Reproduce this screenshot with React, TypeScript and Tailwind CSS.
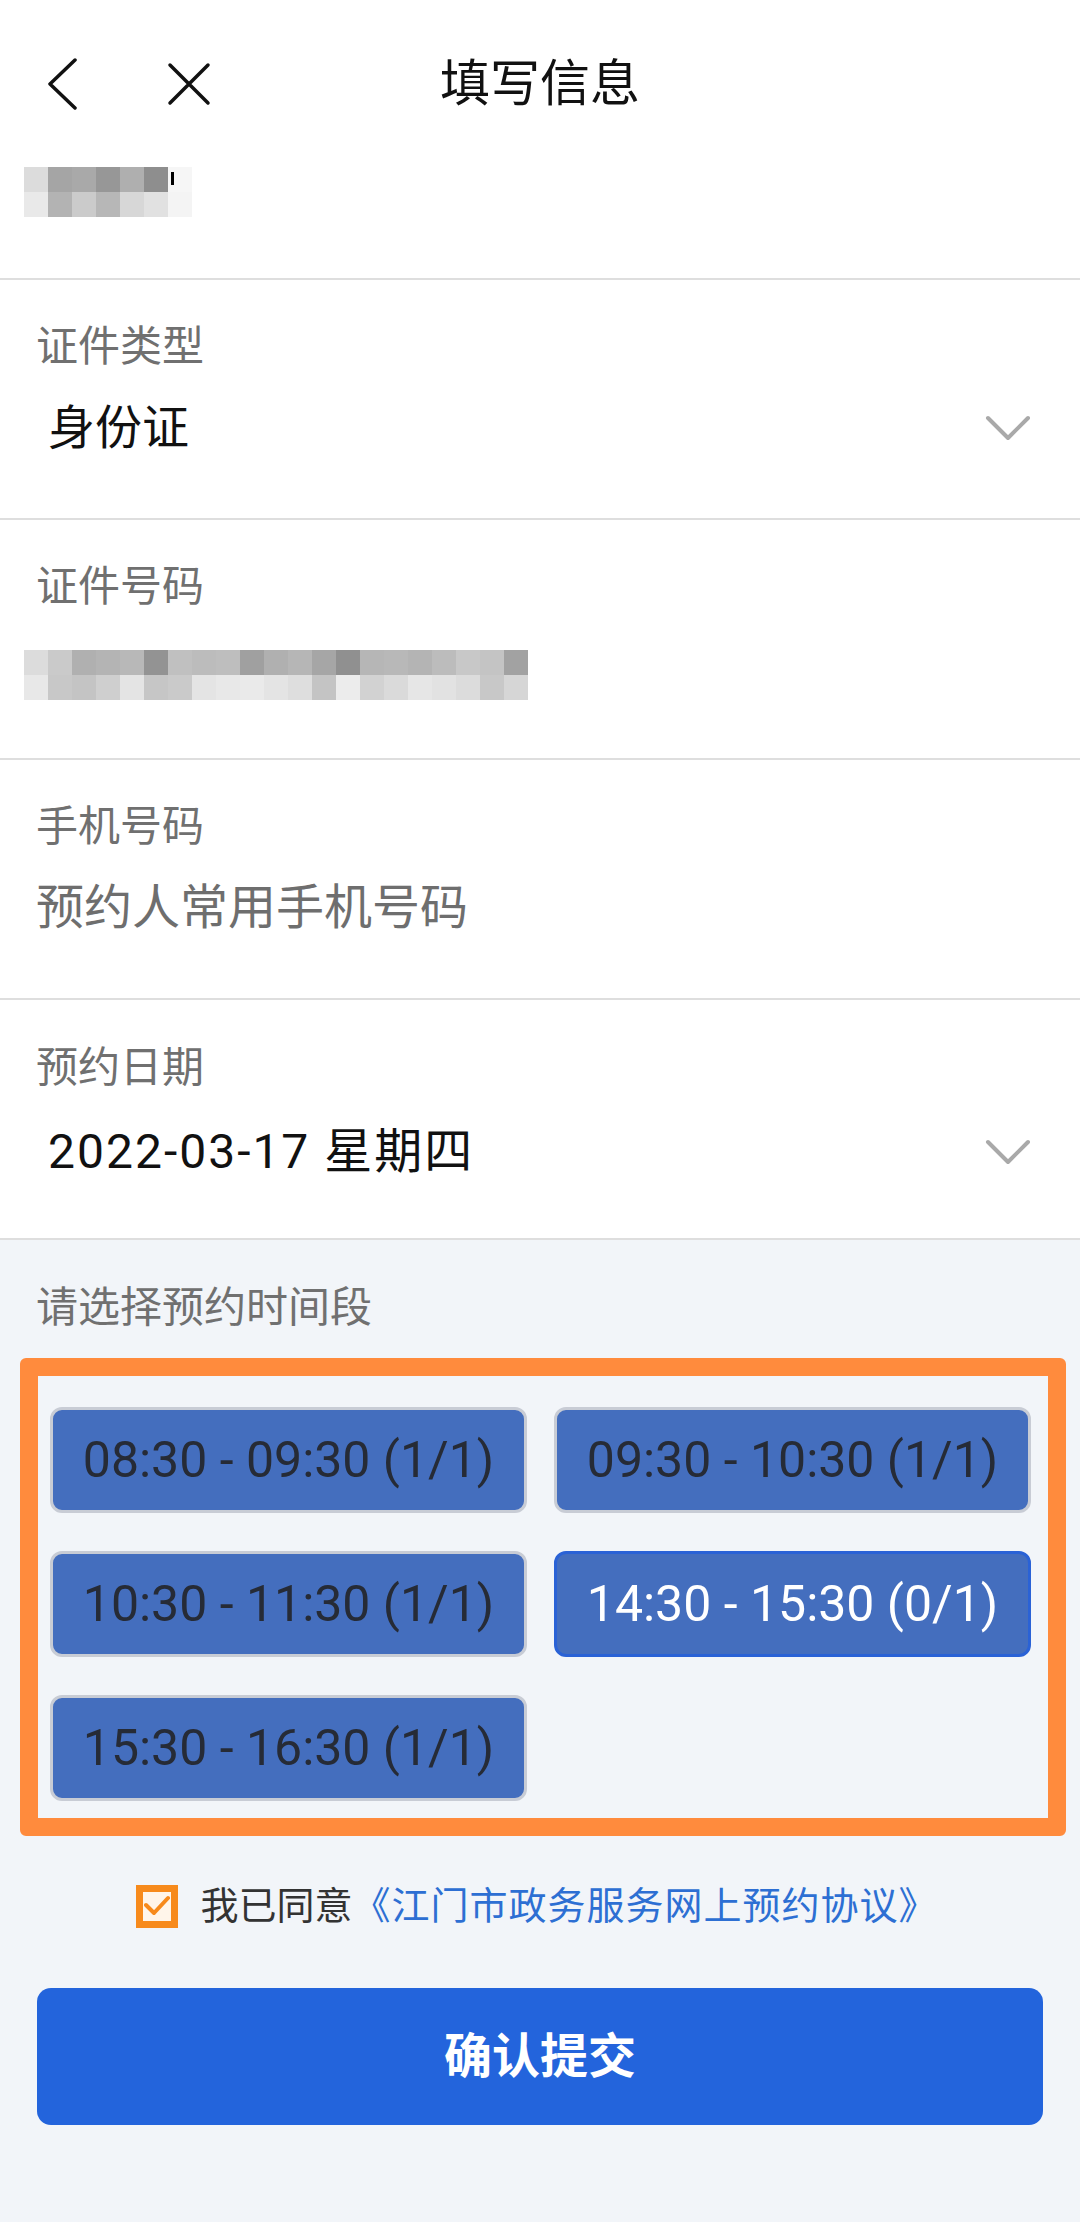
import React from 'react';

const nameBlocks = [
  ['#dcdcdc', '#a5a5a5', '#a9a9a9', '#979797', '#afafaf', '#8e8e8e', '#f6f6f6'],
  ['#e9e9e9', '#b3b3b3', '#cbcbcb', '#b7b7b7', '#d7d7d7', '#e1e1e1', '#f4f4f4'],
];

const idBlocks = [
  ['#dcdcdc', '#cacaca', '#b0b0b0', '#b4b4b4', '#b8b8b8', '#939393', '#c0c0c0', '#bcbcbc', '#bebebe', '#a0a0a0', '#b0b0b0', '#b6b6b6', '#a6a6a6', '#909090', '#b6b6b6', '#b8b8b8', '#b4b4b4', '#bcbcbc', '#c8c8c8', '#c4c4c4', '#a2a2a2'],
  ['#e8e8e8', '#c8c8c8', '#c4c4c4', '#cfcfcf', '#e4e4e4', '#c6c6c6', '#cacaca', '#e4e4e4', '#e8e8e8', '#eaeaea', '#e4e4e4', '#dedede', '#c4c4c4', '#ececec', '#d2d2d2', '#dadada', '#e6e6e6', '#e2e2e2', '#dcdcdc', '#c8c8c8', '#d6d6d6'],
];

const slots = [
  { label: '08:30 - 09:30 (1/1)', selected: false },
  { label: '09:30 - 10:30 (1/1)', selected: false },
  { label: '10:30 - 11:30 (1/1)', selected: false },
  { label: '14:30 - 15:30 (0/1)', selected: true },
  { label: '15:30 - 16:30 (1/1)', selected: false },
];

function ChevronDown() {
  return (
    <svg width="48" height="28" viewBox="0 0 48 28" fill="none">
      <path d="M4 4 L24 24 L44 4" stroke="#a9a9a9" strokeWidth="4" strokeLinecap="round" strokeLinejoin="round" />
    </svg>
  );
}

function Pixelated({ rows }: { rows: string[][] }) {
  return (
    <div className="flex flex-col">
      {rows.map((row, i) => (
        <div key={i} className="flex">
          {row.map((c, j) => (
            <div key={j} className="h-[25px] w-[24px]" style={{ backgroundColor: c }} />
          ))}
        </div>
      ))}
    </div>
  );
}

export default function App() {
  return (
    <div className="min-h-[2222px] w-[1080px] bg-[#f2f5f9] font-[Roboto,'Noto_Sans_CJK_SC',sans-serif]">
      {/* white form area */}
      <div className="bg-white">
        {/* header + name */}
        <div className="h-[280px] border-b-2 border-[#dedede]">
          <div className="grid h-[167px] grid-cols-[1fr_auto_1fr] items-center">
            <div className="flex items-center pl-[46px]">
              <svg width="32" height="52" viewBox="0 0 32 52" fill="none">
                <path d="M29 2 L4 26 L29 50" stroke="#111" strokeWidth="3.5" strokeLinecap="round" strokeLinejoin="round" />
              </svg>
              <svg className="ml-[89px]" width="44" height="44" viewBox="0 0 44 44" fill="none">
                <path d="M3 3 L41 41 M41 3 L3 41" stroke="#111" strokeWidth="3.5" strokeLinecap="round" />
              </svg>
            </div>
            <div className="text-[50px] leading-none text-[#111]">填写信息</div>
            <div />
          </div>
          <div className="relative ml-[24px] w-fit">
            <Pixelated rows={nameBlocks} />
            <div className="absolute left-[147px] top-[5px] h-[13px] w-[3px] bg-black" />
          </div>
        </div>

        {/* 证件类型 */}
        <div className="h-[240px] border-b-2 border-[#dedede] pt-[46px]">
          <div className="pl-[36px] text-[42px] leading-[42px] text-[#707070]">证件类型</div>
          <div className="mt-[30px] flex h-[60px] items-center justify-between pl-[48px] pr-[48px]">
            <span className="text-[47px] text-[#111]">身份证</span>
            <ChevronDown />
          </div>
        </div>

        {/* 证件号码 */}
        <div className="h-[240px] border-b-2 border-[#dedede] pt-[46px]">
          <div className="pl-[36px] text-[42px] leading-[42px] text-[#707070]">证件号码</div>
          <div className="mt-[42px] pl-[24px]">
            <Pixelated rows={idBlocks} />
          </div>
        </div>

        {/* 手机号码 */}
        <div className="h-[240px] border-b-2 border-[#dedede] pt-[46px]">
          <div className="pl-[36px] text-[42px] leading-[42px] text-[#707070]">手机号码</div>
          <div className="mt-[30px] h-[60px] pl-[36px] text-[48px] leading-[60px] text-[#6e6e6e]">预约人常用手机号码</div>
        </div>

        {/* 预约日期 */}
        <div className="h-[240px] border-b-2 border-[#dedede] pt-[47px]">
          <div className="pl-[36px] text-[42px] leading-[42px] text-[#707070]">预约日期</div>
          <div className="mt-[33px] flex h-[60px] items-center justify-between pl-[48px] pr-[48px]">
            <span className="text-[48px] tracking-[2px] text-[#111]">2022-03-17 星期四</span>
            <ChevronDown />
          </div>
        </div>
      </div>

      {/* time slots */}
      <div className="pt-[47px]">
        <div className="pl-[36px] text-[42px] leading-[42px] text-[#707070]">请选择预约时间段</div>
        <div className="ml-[20px] mr-[14px] mt-[29px] rounded-[6px] border-[18px] border-[#ff8b3d]">
          <div className="grid grid-cols-2 gap-x-[27px] gap-y-[38px] pb-[17px] pl-[12px] pr-[17px] pt-[31px]">
            {slots.map((s) => (
              <div
                key={s.label}
                className={
                  s.selected
                    ? 'flex h-[106px] items-center justify-center rounded-[12px] border-[3px] border-[#2a62d6] bg-[#446ebe] text-[50px] text-white'
                    : 'flex h-[106px] items-center justify-center rounded-[12px] border-[3px] border-[#c8ccd5] bg-[#446ebe] text-[50px] text-[#262b36]'
                }
              >
                {s.label}
              </div>
            ))}
          </div>
        </div>

        {/* agreement */}
        <div className="mt-[48px] flex items-center justify-center pr-[6px]">
          <div className="flex h-[43px] w-[42px] items-center justify-center bg-[#f78a1c]">
            <div className="flex h-[29px] w-[28px] items-center justify-center bg-[#fff5ea]">
              <svg width="26" height="22" viewBox="0 0 26 22" fill="none">
                <path d="M2 10 L10 18 L24 3" stroke="#f78a1c" strokeWidth="4" strokeLinecap="round" strokeLinejoin="round" />
              </svg>
            </div>
          </div>
          <span className="ml-[22px] text-[38px] leading-[44px] text-[#333]">我已同意</span>
          <span className="text-[38px] leading-[44px] tracking-[1px] text-[#2d6fd3]">《江门市政务服务网上预约协议》</span>
        </div>

        {/* submit */}
        <div className="mx-[37px] mt-[60px] flex h-[137px] items-center justify-center rounded-[14px] bg-[#2364dc] text-[48px] font-bold text-white">
          确认提交
        </div>
      </div>
    </div>
  );
}
